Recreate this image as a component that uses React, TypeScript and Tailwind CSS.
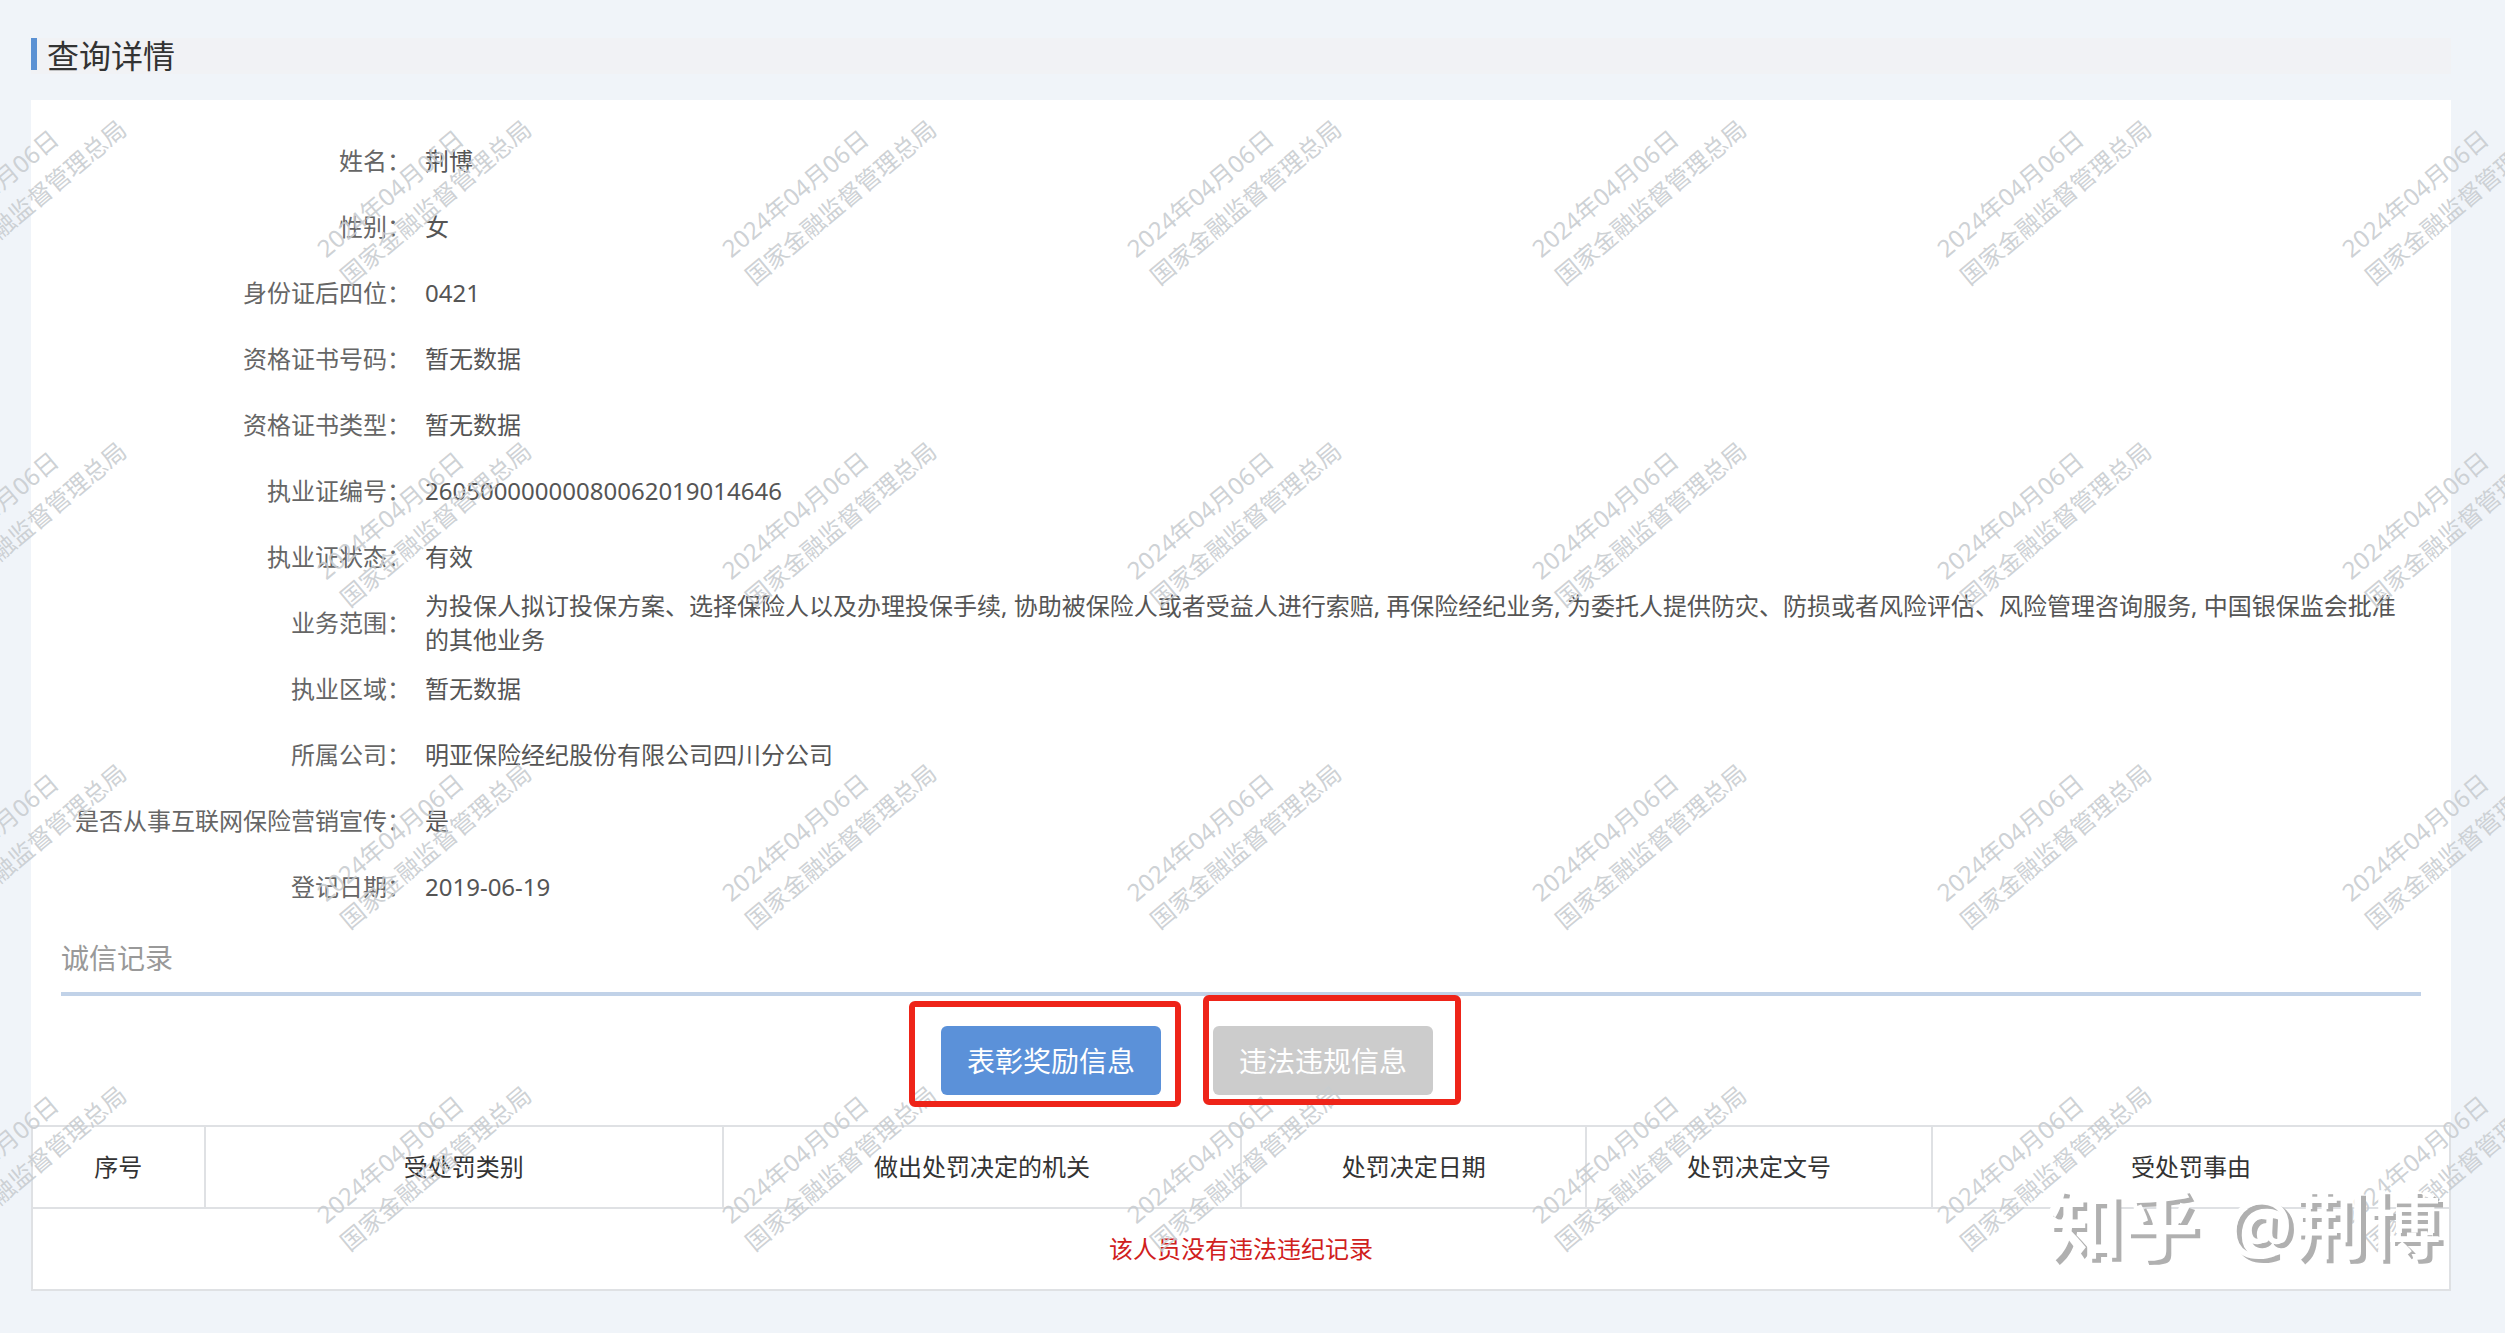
import React from 'react';

interface DetailItem {
  label: string;
  value: string;
}

const details: DetailItem[] = [
  { label: '姓名', value: '荆博' },
  { label: '性别', value: '女' },
  { label: '身份证后四位', value: '0421' },
  { label: '资格证书号码', value: '暂无数据' },
  { label: '资格证书类型', value: '暂无数据' },
  { label: '执业证编号', value: '26050000000080062019014646' },
  { label: '执业证状态', value: '有效' },
  {
    label: '业务范围',
    value:
      '为投保人拟订投保方案、选择保险人以及办理投保手续, 协助被保险人或者受益人进行索赔, 再保险经纪业务, 为委托人提供防灾、防损或者风险评估、风险管理咨询服务, 中国银保监会批准的其他业务',
  },
  { label: '执业区域', value: '暂无数据' },
  { label: '所属公司', value: '明亚保险经纪股份有限公司四川分公司' },
  { label: '是否从事互联网保险营销宣传', value: '是' },
  { label: '登记日期', value: '2019-06-19' },
];

const columns = [
  { title: '序号', width: 'w-1/14' },
  { title: '受处罚类别', width: 'w-3/14' },
  { title: '做出处罚决定的机关', width: 'w-3/14' },
  { title: '处罚决定日期', width: 'w-2/14' },
  { title: '处罚决定文号', width: 'w-2/14' },
  { title: '受处罚事由', width: 'w-3/14' },
];

// 7 columns x 4 rows of stamps
const stamps = Array.from({ length: 28 }, (_, i) => i);

function Watermark() {
  return (
    <div aria-hidden="true" className="absolute inset-0 overflow-hidden pointer-events-none select-none">
      <div className="grid grid-cols-[repeat(7,405px)] auto-rows-[322px] -ml-24 pt-[238px]">
        {stamps.map((i) => (
          <div key={i} className="w-max h-max origin-top-left -rotate-40 text-2xl leading-9 text-[#c8ccd0]/90">
            2024年04月06日
            <br />
            国家金融监督管理总局
          </div>
        ))}
      </div>
    </div>
  );
}

// White lettering that only shows through its grey shadow
function AuthorMark() {
  return (
    <div
      aria-hidden="true"
      className="absolute right-16 bottom-[70px] flex items-center gap-7 leading-[76px] text-white [text-shadow:5px_4px_0_#b0b0b0] pointer-events-none select-none"
    >
      <span className="text-[76px] font-bold">知乎</span>
      <span className="text-[74px] font-medium">@荆博</span>
    </div>
  );
}

function DetailList() {
  return (
    <dl className="pt-7 text-2xl leading-[34px]">
      {details.map((item) => (
        <div key={item.label} className="flex items-center h-[66px]">
          <dt className="w-[380px] shrink-0 text-right text-[#666]">{item.label}：</dt>
          <dd className="ml-3.5 mr-12 flex-1 text-[#555]">{item.value}</dd>
        </div>
      ))}
    </dl>
  );
}

function RecordTable() {
  return (
    <table className="w-full table-fixed border-collapse border-2 border-[#dfe1e4] text-2xl text-center">
      <thead>
        <tr className="h-[82px]">
          {columns.map((col) => (
            <th key={col.title} className={`${col.width} border-2 border-[#dfe1e4] font-normal text-[#333]`}>
              {col.title}
            </th>
          ))}
        </tr>
      </thead>
      <tbody>
        <tr className="h-[82px]">
          <td colSpan={6} className="text-[#d0201c]">该人员没有违法违纪记录</td>
        </tr>
      </tbody>
    </table>
  );
}

export default function App() {
  return (
    <div className="relative min-h-screen bg-[#f0f4f9] pt-[38px] pb-[42px] pl-[31px] pr-[54px] font-['Noto_Sans','Noto_Sans_CJK_SC',sans-serif]">
      {/* Title */}
      <header className="flex items-start h-9 bg-[#f1f2f5]">
        <span className="w-1.5 h-8 bg-[#5b91d3]" />
        <h1 className="ml-2.5 text-[32px] leading-9 text-[#333]">查询详情</h1>
      </header>

      <main className="mt-[26px] bg-white">
        <DetailList />

        {/* Integrity records */}
        <section className="px-[30px]">
          <h2 className="h-[76px] border-b-4 border-[#c1d2e8] text-[28px] leading-[76px] text-[#999]">诚信记录</h2>
          <div className="flex justify-center gap-[52px] pt-[30px] pb-[30px] pr-[108px]">
            <div className="relative">
              <button type="button" className="block w-[220px] h-[69px] rounded-md bg-[#5b91d9] text-[28px] text-white">
                表彰奖励信息
              </button>
              <span className="absolute z-10 -left-8 -right-5 -top-[25px] -bottom-3 border-6 border-[#ee2419] rounded-md pointer-events-none" />
            </div>
            <div className="relative">
              <button type="button" className="block w-[220px] h-[69px] rounded-md bg-[#ccc] text-[28px] text-white">
                违法违规信息
              </button>
              <span className="absolute z-10 -left-2.5 -right-7 -top-[31px] -bottom-2.5 border-6 border-[#ee2419] rounded-md pointer-events-none" />
            </div>
          </div>
        </section>

        <RecordTable />
      </main>

      <Watermark />
      <AuthorMark />
    </div>
  );
}
